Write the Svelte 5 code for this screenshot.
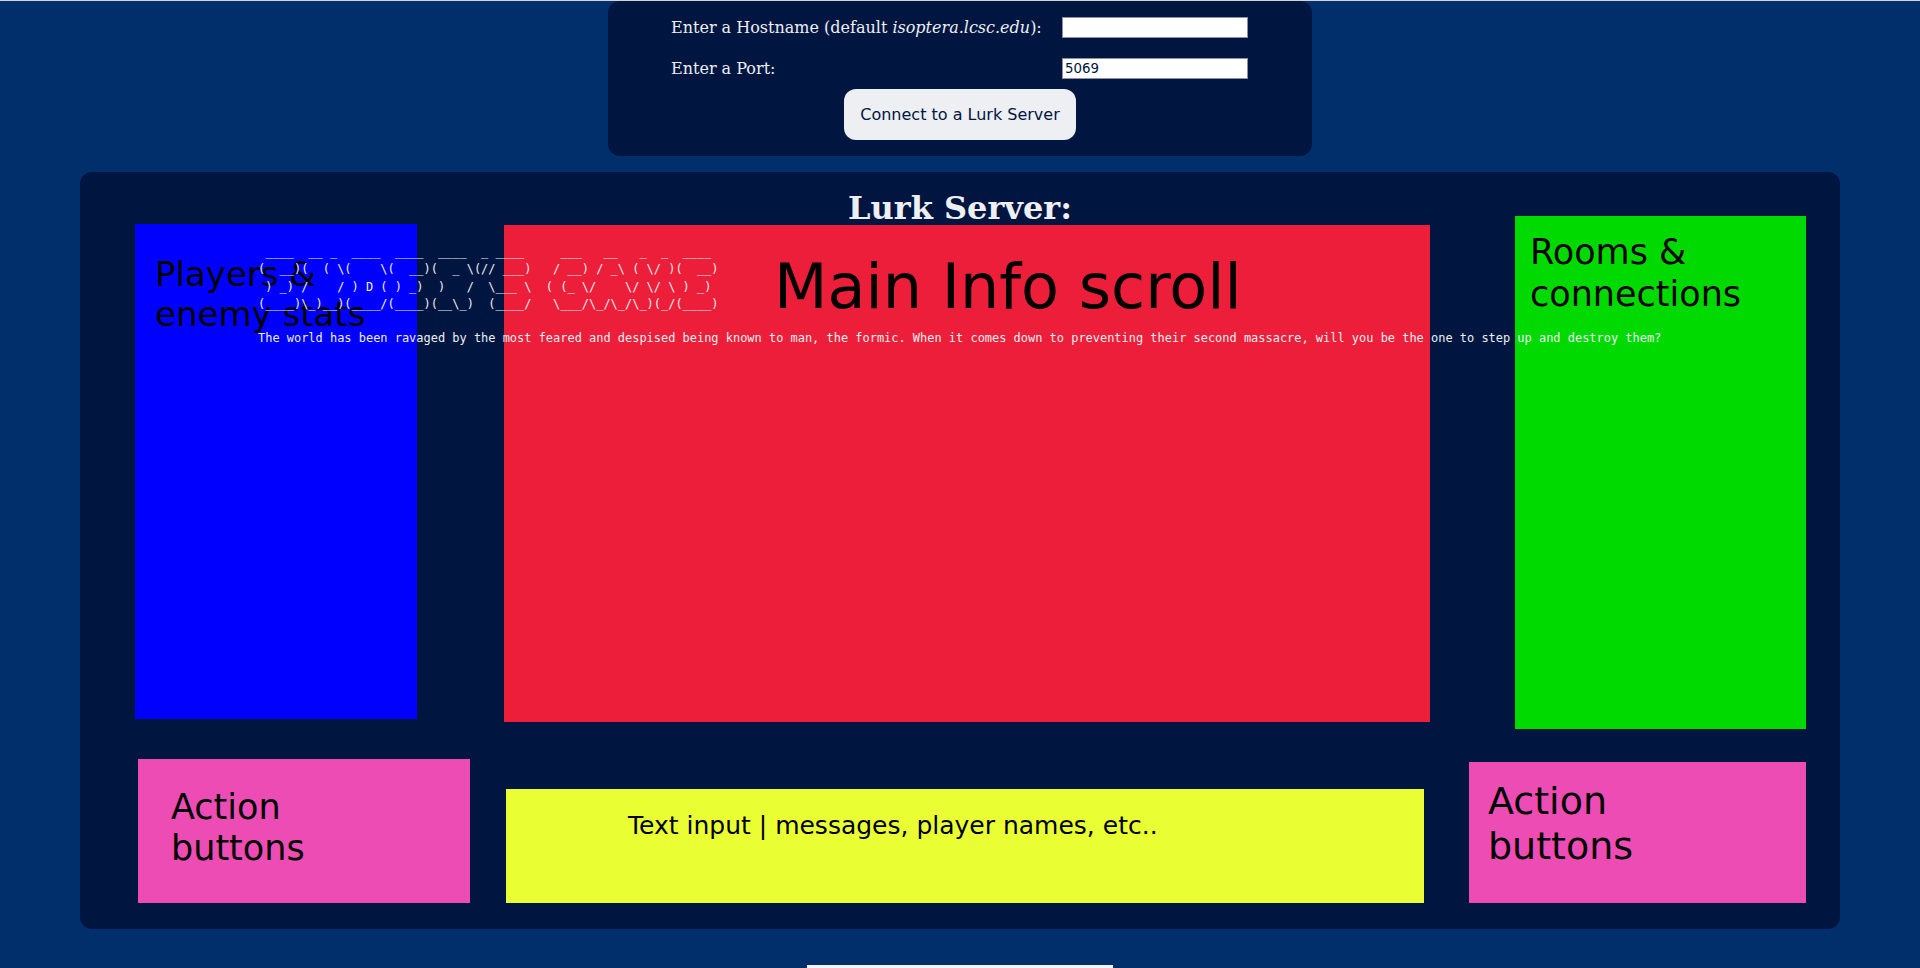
<script>
  const banner = [
    " ____  __ _  ____  ____  ____  _ ____     ___   __   _  _  ____",
    "(  __)(  ( \\(    \\(  __)(  _ \\(// ___)   / __) / _\\ ( \\/ )(  __)",
    " ) _) /    / ) D ( ) _)  )   /  \\___ \\  ( (_ \\/    \\/ \\/ \\ ) _)",
    "(____)\\_)__)(____/(____)(__\\_)  (____/   \\___/\\_/\\_/\\_)(_/(____)"
  ].join("\n");
</script>

<div class="topline"></div>

<section class="connect">
  <div class="fields">
    <label for="host">Enter a Hostname (default <em>isoptera.lcsc.edu</em>):</label>
    <input id="host" type="text" />
    <label for="port">Enter a Port:</label>
    <input id="port" type="text" value="5069" />
  </div>
  <button type="button">Connect to a Lurk Server</button>
</section>

<main class="server">
  <h1>Lurk Server:</h1>

  <div class="row top">
    <div class="box stats">Players &amp; enemy stats</div>
    <div class="box scroll">Main Info scroll</div>
    <div class="box rooms">Rooms &amp; connections</div>
  </div>

  <div class="row bottom">
    <div class="box action-left">Action buttons</div>
    <div class="box text-input">Text input | messages, player names, etc..</div>
    <div class="box action-right">Action buttons</div>
  </div>

  <div class="intro">
    <pre>{banner}</pre>
    <p>The world has been ravaged by the most feared and despised being known to man, the formic. When it comes down to preventing their second massacre, will you be the one to step up and destroy them?</p>
  </div>
</main>

<div class="strip"></div>

<style>
  :global(html) {
    overflow: hidden;
  }
  :global(body) {
    margin: 0;
    background: #002f6c;
    color: #edeff2;
    font-family: "DejaVu Serif", serif;
  }
  .topline {
    height: 1px;
    background: #d4d4cf;
  }
  .connect {
    box-sizing: border-box;
    width: 704px;
    height: 155px;
    margin: 0 auto;
    padding-top: 16px;
    background: #001641;
    border-radius: 12px;
    display: flex;
    flex-direction: column;
    align-items: center;
  }
  .fields {
    display: grid;
    grid-template-columns: 391px 186px;
    row-gap: 20px;
    align-items: center;
    align-self: flex-start;
    margin-left: 63px;
  }
  label {
    font-size: 16px;
    line-height: 19px;
    margin-bottom: 1px;
  }
  input {
    box-sizing: border-box;
    width: 186px;
    height: 21px;
    margin: 0;
    padding: 1px 2px;
    border: 1px solid #8f8f9d;
    background: #fff;
    color: #001641;
    font: 13.33px "DejaVu Sans", sans-serif;
  }
  button {
    width: 232px;
    height: 51px;
    margin-top: 10px;
    padding: 0;
    border: none;
    border-radius: 12px;
    background: #edeff2;
    color: #001641;
    font: 16px "DejaVu Sans", sans-serif;
  }
  .server {
    position: relative;
    box-sizing: border-box;
    height: 757px;
    margin: 16px 80px 0;
    padding-bottom: 26px;
    background: #001641;
    border-radius: 12px;
  }
  h1 {
    margin: 0;
    height: 44px;
    font-size: 32px;
    line-height: 72px;
    text-align: center;
  }
  .row {
    display: flex;
    padding-left: 55px;
  }
  .top {
    align-items: flex-start;
  }
  .bottom {
    align-items: flex-end;
    margin-top: 30px;
  }
  .box {
    box-sizing: border-box;
    color: #000;
    font-family: "DejaVu Sans", sans-serif;
  }
  .stats {
    width: 282px;
    height: 495px;
    margin-top: 8px;
    padding: 30px 0 0 20px;
    background: #0000ff;
    font-size: 34px;
  }
  .scroll {
    width: 926px;
    height: 497px;
    margin: 9px 0 0 87px;
    padding: 25px 0 0 270px;
    background: #ec1e39;
    font-size: 62px;
  }
  .rooms {
    width: 291px;
    height: 513px;
    margin-left: 85px;
    padding: 15px 0 0 15px;
    background: #00da00;
    font-size: 35px;
    line-height: 42px;
  }
  .action-left {
    width: 332px;
    height: 144px;
    margin-left: 3px;
    padding: 28px 100px 0 33px;
    background: #ed4cb4;
    font-size: 35px;
    line-height: 41px;
  }
  .text-input {
    width: 918px;
    height: 114px;
    margin-left: 36px;
    padding: 22px 0 0 122px;
    background: #eaff33;
    font-size: 25px;
  }
  .action-right {
    width: 337px;
    height: 141px;
    margin-left: 45px;
    padding: 17px 100px 0 19px;
    background: #ed4cb4;
    font-size: 38px;
    line-height: 45px;
  }
  .intro {
    position: absolute;
    left: 178px;
    top: 72px;
    font-family: "DejaVu Sans Mono", monospace;
    font-size: 11.96px;
    white-space: nowrap;
  }
  pre {
    margin: 0;
    font: inherit;
    line-height: 17.33px;
  }
  p {
    margin: 17px 0 0;
    line-height: 17.33px;
  }
  .strip {
    width: 306px;
    height: 3px;
    margin: 36px auto 0;
    background: #f4f4f4;
  }
</style>
